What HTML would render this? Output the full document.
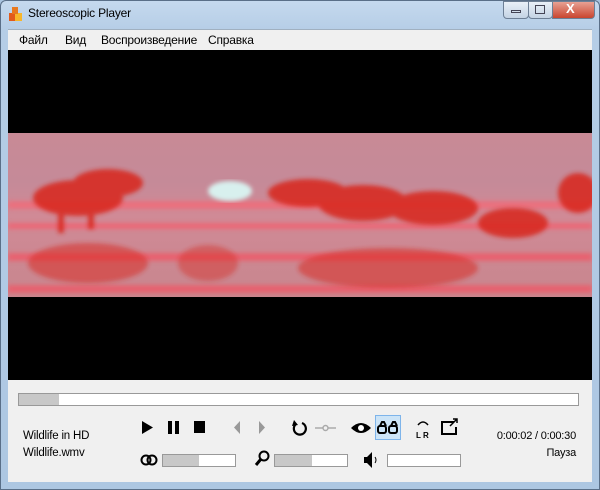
<!DOCTYPE html>
<html><head><meta charset="utf-8"><style>
*{margin:0;padding:0;box-sizing:border-box}
body{width:600px;height:490px;overflow:hidden;background:#a9c4e0;font-family:"Liberation Sans","DejaVu Sans",sans-serif;font-size:12px;color:#000;position:relative}
.frame{position:absolute;left:0;top:0;width:600px;height:490px;border:1px solid #5a6f88;border-radius:6px 6px 0 0;background:linear-gradient(#c5d9ee,#b5cde6 30px,#adc7e2)}
.title{position:absolute;left:28px;top:6px;font-size:12px;color:#000;letter-spacing:-0.2px}
.menu{position:absolute;left:8px;top:29px;width:584px;height:21px;background:#f0f0f0;border-top:1px solid #a0b0c0}
.menu span{position:absolute;top:3px;font-size:12px;letter-spacing:-0.2px}
.video{position:absolute;left:8px;top:50px;width:584px;height:330px;background:#000}
.ctl{position:absolute;left:8px;top:380px;width:584px;height:102px;background:#f0f0f0}
.ctl .t{font-size:11.5px;letter-spacing:-0.2px}
.abs{position:absolute}
.bar{position:absolute;background:#fff;border:1px solid #999}
.bar i{position:absolute;left:0;top:0;bottom:0;background:#c8c8c8}
.wb{position:absolute;top:1px;height:18px;border:1px solid #6d7f95;border-radius:0 0 4px 4px}
</style></head><body>
<div class="frame"></div>
<svg class="abs" style="left:8px;top:6px" width="16" height="16"><rect x="1" y="7" width="7" height="8" fill="#e25a1c"/><rect x="7" y="7" width="7" height="8" fill="#f7b62a"/><rect x="4" y="1" width="6" height="7" fill="#e8791f"/></svg>
<div class="title">Stereoscopic Player</div>
<div class="wb" style="left:503px;width:26px;background:linear-gradient(#e9f0f8,#c4d3e4)"></div>
<div class="wb" style="left:528px;width:25px;background:linear-gradient(#e9f0f8,#c4d3e4)"></div>
<div class="wb" style="left:552px;width:43px;background:linear-gradient(#e8a193,#c9452f);border-radius:0 0 4px 0"></div>
<div class="abs" style="left:511px;top:10px;width:10px;height:3px;border:1px solid #445"></div>
<div class="abs" style="left:535px;top:5px;width:10px;height:9px;border:1px solid #445"></div>
<div class="abs" style="left:566px;top:1px;color:#fff;font-weight:bold;font-size:13px">X</div>
<div class="menu"><span style="left:11px">Файл</span><span style="left:57px">Вид</span><span style="left:93px">Воспроизведение</span><span style="left:200px">Справка</span></div>
<div class="video">
<svg class="abs" style="left:0;top:83px" width="584" height="164">
<defs><linearGradient id="g" x1="0" y1="0" x2="0" y2="1"><stop offset="0" stop-color="#c88a96"/><stop offset=".3" stop-color="#c58a98"/><stop offset=".5" stop-color="#d08a96"/><stop offset="1" stop-color="#c8868e"/></linearGradient><filter id="b"><feGaussianBlur stdDeviation="2"/></filter></defs>
<rect width="584" height="164" fill="url(#g)"/>
<g filter="url(#b)" opacity=".8">
<rect y="68" width="584" height="8" fill="#f26a78"/>
<rect y="90" width="584" height="6" fill="#f26070"/>
<rect y="120" width="584" height="8" fill="#ee5a68"/>
<rect y="152" width="584" height="8" fill="#ee5a68"/>
</g>
<g filter="url(#b)" fill="#d8281e" opacity=".85">
<ellipse cx="70" cy="65" rx="45" ry="18"/><ellipse cx="100" cy="50" rx="35" ry="14"/><rect x="50" y="70" width="6" height="30"/><rect x="80" y="70" width="6" height="26"/>
<ellipse cx="300" cy="60" rx="40" ry="14"/><ellipse cx="355" cy="70" rx="45" ry="18"/><ellipse cx="425" cy="75" rx="45" ry="17"/><ellipse cx="505" cy="90" rx="35" ry="15"/><ellipse cx="570" cy="60" rx="20" ry="20"/>
<ellipse cx="80" cy="130" rx="60" ry="20" opacity=".6"/><ellipse cx="380" cy="135" rx="90" ry="20" opacity=".6"/><ellipse cx="200" cy="130" rx="30" ry="18" opacity=".5"/>
</g>
<ellipse cx="222" cy="58" rx="22" ry="10" fill="#d8f0ee" filter="url(#b)"/>
</svg>
</div>
<div class="ctl">
<div class="bar" style="left:10px;top:13px;width:561px;height:13px"><i style="width:40px"></i></div>
<div class="abs t" style="left:15px;top:50px">Wildlife in HD</div>
<div class="abs t" style="left:15px;top:67px">Wildlife.wmv</div>
<div class="abs t" style="right:16px;top:50px;font-size:11px">0:00:02 / 0:00:30</div>
<div class="abs t" style="right:16px;top:67px;font-size:11px">Пауза</div>
<div class="abs" style="left:367px;top:35px;width:26px;height:25px;background:#cce4f7;border:1px solid #7eb4ea"></div>
<svg class="abs" style="left:0;top:0" width="584" height="102">
<path d="M134 41v13l11-6.5z" fill="#000"/>
<rect x="160" y="41" width="4" height="13"/><rect x="167" y="41" width="4" height="13"/>
<rect x="186" y="41" width="11" height="12"/>
<path d="M232 41v13l-6-6.5z" fill="#999"/><path d="M251 41v13l6-6.5z" fill="#999"/>
<path d="M294 43a6 6 0 1 1-6 1" fill="none" stroke="#000" stroke-width="2.2"/><path d="M286 40l4 5-6 1z"/>
<path d="M307 48h8M320 48h8" stroke="#aaa" stroke-width="1.5"/><circle cx="317.5" cy="48" r="2.5" fill="none" stroke="#aaa" stroke-width="1.5"/>
<path d="M343 48q10-10 20 0q-10 10-20 0z"/><circle cx="353" cy="48" r="3" fill="#fff"/>
<g fill="none" stroke="#000" stroke-width="2"><rect x="370" y="46" width="8" height="7" rx="2"/><rect x="381" y="46" width="8" height="7" rx="2"/><path d="M372 46l2-4h2l2 4M383 46l2-4h2l2 4"/></g>
<text x="408" y="58" font-size="8" font-weight="bold" font-family="Liberation Sans">L R</text>
<path d="M410 45q5-6 10 0" fill="none" stroke="#000" stroke-width="1.5"/>
<path d="M446 42h-12v12h14v-7" fill="none" stroke="#000" stroke-width="2"/><path d="M442 46l7-7M445 39h4v4" fill="none" stroke="#000" stroke-width="1.5"/>
<circle cx="138" cy="80" r="4.5" fill="none" stroke="#000" stroke-width="2"/><circle cx="144" cy="80" r="4.5" fill="none" stroke="#000" stroke-width="2"/>
<circle cx="256" cy="76" r="4.5" fill="none" stroke="#000" stroke-width="2"/><path d="M253 79l-5 6" stroke="#000" stroke-width="3"/>
<path d="M356 77h3l5-5v16l-5-5h-3z"/><path d="M367 77q2 3 0 6" fill="none" stroke="#000"/>
</svg>
<div class="bar" style="left:154px;top:74px;width:74px;height:13px"><i style="width:36px"></i></div>
<div class="bar" style="left:266px;top:74px;width:74px;height:13px"><i style="width:37px"></i></div>
<div class="bar" style="left:379px;top:74px;width:74px;height:13px"></div>
</div>
</body></html>
